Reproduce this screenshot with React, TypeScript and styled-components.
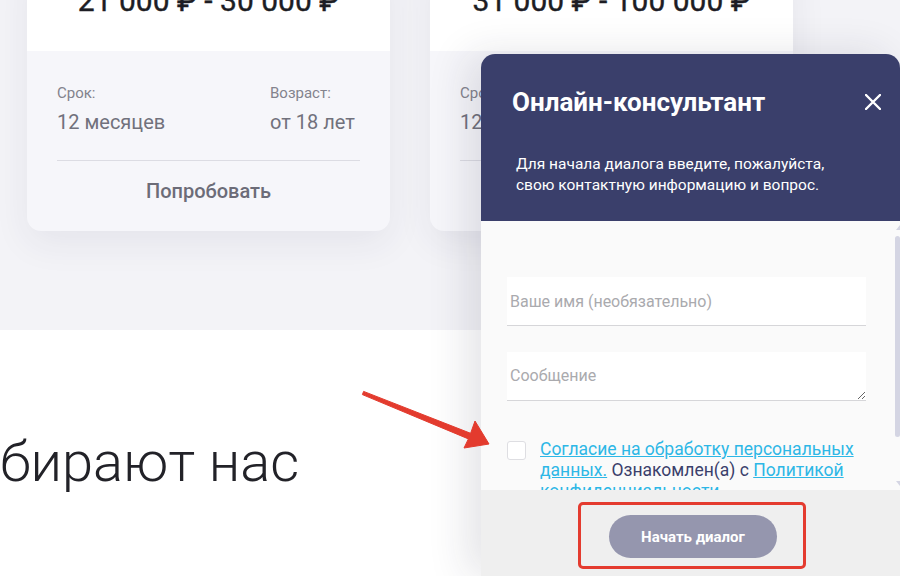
import * as React from 'react';
import styled, { createGlobalStyle } from 'styled-components';

const GlobalStyle = createGlobalStyle`
  html, body {
    margin: 0;
    padding: 0;
    overflow: hidden;
    background: #ffffff;
    font-family: Roboto, 'Noto Sans', 'Liberation Sans', sans-serif;
  }
  * {
    box-sizing: border-box;
  }
`;

const Page = styled.div`
  position: relative;
  width: 900px;
  height: 576px;
  overflow: hidden;
`;

const OffersSection = styled.section`
  background: #f3f3f7;
  padding: 0 0 99px 27px;
`;

const CardsRow = styled.div`
  display: flex;
  gap: 40px;
  margin-top: -40px;
`;

const Card = styled.div`
  width: 363px;
  flex: none;
  border-radius: 14px;
  overflow: hidden;
  background: #f6f6fa;
  box-shadow: 0 12px 36px rgba(40, 40, 80, 0.07);
`;

const PriceArea = styled.div`
  background: #ffffff;
  padding: 22px 0 31px;
  text-align: center;
`;

const Price = styled.div`
  font-size: 30px;
  line-height: 38px;
  font-weight: 400;
  color: #1d1d24;
  -webkit-text-stroke: 0.4px #1d1d24;
`;

const CardInfo = styled.div`
  padding: 33px 30px 28px;
`;

const InfoGrid = styled.div`
  display: grid;
  grid-template-columns: 213px 1fr;
  padding-bottom: 26px;
  border-bottom: 1px solid #dcdce3;
`;

const InfoLabel = styled.div`
  font-size: 15px;
  line-height: 18px;
  color: #83838d;
`;

const InfoValue = styled.div`
  margin-top: 8px;
  font-size: 20px;
  line-height: 24px;
  color: #71717c;
`;

const TryLink = styled.div`
  margin-top: 18px;
  text-align: center;
  font-size: 20px;
  line-height: 24px;
  font-weight: 500;
  color: #6c6c78;
`;

const AboutSection = styled.section`
  background: #ffffff;
  padding-top: 100px;
`;

const Heading = styled.h2`
  margin: 0;
  font-size: 56px;
  line-height: 64px;
  font-weight: 300;
  color: #222228;
`;

const ChatWidget = styled.aside`
  position: absolute;
  top: 54px;
  right: 0;
  bottom: 0;
  width: 419px;
  display: flex;
  flex-direction: column;
  border-radius: 14px 14px 0 0;
  overflow: hidden;
  box-shadow: -14px 0 40px rgba(30, 30, 60, 0.12);
`;

const ChatHeader = styled.header`
  flex: none;
  height: 167px;
  background: #3a3f6b;
  padding: 34px 19px 0 31px;
  color: #ffffff;
`;

const TitleRow = styled.div`
  display: flex;
  align-items: center;
  justify-content: space-between;
`;

const ChatTitle = styled.h3`
  margin: 0;
  font-size: 26px;
  line-height: 28px;
  font-weight: 700;
`;

const CloseButton = styled.button`
  border: 0;
  padding: 0;
  background: none;
  width: 16px;
  height: 16px;
  display: flex;
  cursor: pointer;
`;

const ChatIntro = styled.p`
  margin: 38px 0 0 4px;
  font-size: 15.5px;
  line-height: 21px;
`;

const BodyFrame = styled.div`
  position: relative;
  flex: 1;
  min-height: 0;
  background: #fafafa;
`;

const ChatBody = styled.div`
  height: 100%;
  overflow: hidden;
  padding: 56px 34px 60px 26px;
`;

const ScrollThumb = styled.div`
  position: absolute;
  top: 15px;
  right: 0;
  width: 5px;
  height: 201px;
  border-radius: 3px;
  background: #d4d5e3;
`;

const ScrollArrow = styled.div<{ $down?: boolean }>`
  position: absolute;
  right: 0;
  ${({ $down }) => ($down ? 'bottom: 4px;' : 'top: 4px;')}
  width: 0;
  height: 0;
  border-left: 4px solid transparent;
  ${({ $down }) => ($down ? 'border-top: 5px solid #d4d5e3;' : 'border-bottom: 5px solid #d4d5e3;')}
`;

const Field = styled.input`
  display: block;
  width: 100%;
  height: 49px;
  border: 0;
  border-bottom: 1px solid #d6d6d9;
  background: #ffffff;
  padding: 0 3px;
  font-family: inherit;
  font-size: 16px;
  color: #333;
  outline: none;

  &::placeholder {
    color: #aaaaae;
  }
`;

const MessageField = styled.textarea`
  display: block;
  width: 100%;
  height: 49px;
  margin-top: 26px;
  border: 0;
  border-bottom: 1px solid #d6d6d9;
  background: #ffffff;
  padding: 12px 3px 0;
  font-family: inherit;
  font-size: 16px;
  line-height: 24px;
  outline: none;
  resize: vertical;

  &::placeholder {
    color: #aaaaae;
  }
`;

const Consent = styled.label`
  display: flex;
  gap: 14px;
  margin-top: 38px;
  font-size: 17.5px;
  line-height: 21px;
  color: #3a3f6b;
`;

const CheckBox = styled.span`
  flex: none;
  width: 19px;
  height: 19px;
  margin-top: 2px;
  border: 1px solid #dedee2;
  border-radius: 3px;
  background: #ffffff;
`;

const ConsentLink = styled.a`
  color: #2db7e6;
  text-decoration: underline;
`;

const ChatFooter = styled.footer`
  flex: none;
  height: 86px;
  background: #efefef;
  display: flex;
  justify-content: center;
  align-items: flex-start;
  padding: 12px 0 0 3px;
`;

const Highlight = styled.div`
  border: 3px solid #e43b2f;
  border-radius: 5px;
  padding: 10px 26px 8px 28px;
`;

const StartButton = styled.button`
  width: 168px;
  height: 43px;
  border: 0;
  border-radius: 22px;
  background: #9596ae;
  color: #ffffff;
  font-family: inherit;
  font-size: 15px;
  font-weight: 700;
  cursor: pointer;
`;

const Annotation = styled.svg`
  position: absolute;
  inset: 0;
  pointer-events: none;
`;

type Offer = {
  price: string;
  term: string;
  age: string;
};

const offers: Offer[] = [
  { price: '21 000 ₽ - 30 000 ₽', term: '12 месяцев', age: 'от 18 лет' },
  { price: '31 000 ₽ - 100 000 ₽', term: '12 месяцев', age: 'от 18 лет' },
];

const OfferCard = ({ offer }: { offer: Offer }) => (
  <Card>
    <PriceArea>
      <Price>{offer.price}</Price>
    </PriceArea>
    <CardInfo>
      <InfoGrid>
        <div>
          <InfoLabel>Срок:</InfoLabel>
          <InfoValue>{offer.term}</InfoValue>
        </div>
        <div>
          <InfoLabel>Возраст:</InfoLabel>
          <InfoValue>{offer.age}</InfoValue>
        </div>
      </InfoGrid>
      <TryLink>Попробовать</TryLink>
    </CardInfo>
  </Card>
);

const App = () => (
  <>
    <GlobalStyle />
    <Page>
      <OffersSection>
        <CardsRow>
          {offers.map((offer) => (
            <OfferCard key={offer.price} offer={offer} />
          ))}
        </CardsRow>
      </OffersSection>

      <AboutSection>
        <Heading>бирают нас</Heading>
      </AboutSection>

      <ChatWidget>
        <ChatHeader>
          <TitleRow>
            <ChatTitle>Онлайн-консультант</ChatTitle>
            <CloseButton aria-label="Закрыть">
              <svg width="16" height="16" viewBox="0 0 16 16">
                <path d="M1 1 L15 15 M15 1 L1 15" stroke="#fff" strokeWidth="2.4" strokeLinecap="round" />
              </svg>
            </CloseButton>
          </TitleRow>
          <ChatIntro>
            Для начала диалога введите, пожалуйста,
            <br />
            свою контактную информацию и вопрос.
          </ChatIntro>
        </ChatHeader>

        <BodyFrame>
          <ChatBody>
            <Field placeholder="Ваше имя (необязательно)" />
            <MessageField placeholder="Сообщение" />
            <Consent>
              <CheckBox />
              <span>
                <ConsentLink>Согласие на обработку персональных данных.</ConsentLink> Ознакомлен(а) с{' '}
                <ConsentLink>Политикой конфиденциальности</ConsentLink>
              </span>
            </Consent>
          </ChatBody>
          <ScrollArrow />
          <ScrollThumb />
          <ScrollArrow $down />
        </BodyFrame>

        <ChatFooter>
          <Highlight>
            <StartButton>Начать диалог</StartButton>
          </Highlight>
        </ChatFooter>
      </ChatWidget>

      {/* red pointer drawn over the page */}
      <Annotation width="900" height="576" viewBox="0 0 900 576">
        <polygon
          points="363.6,391.4 470.6,433.3 475,421 489,444 464,448 468.4,438.9 362.4,394.6"
          fill="#e33b2e"
          stroke="#e33b2e"
          strokeWidth="1"
          strokeLinejoin="round"
        />
      </Annotation>
    </Page>
  </>
);

export default App;
